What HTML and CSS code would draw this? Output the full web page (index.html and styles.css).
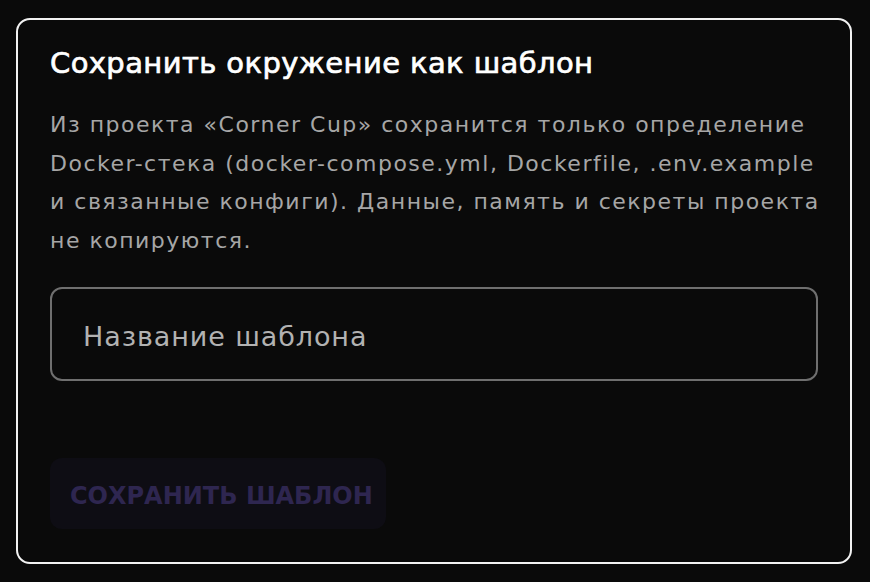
FILE: index.html
```html
<!DOCTYPE html>
<html lang="ru">
<head>
<meta charset="utf-8">
<link rel="stylesheet" href="styles.css">
</head>
<body>
<div class="card">
  <h2 class="title">Сохранить окружение как шаблон</h2>
  <p class="desc">Из проекта «Corner Cup» сохранится только определение Docker-стека (docker-compose.yml, Dockerfile, .env.example и связанные конфиги). Данные, память и секреты проекта не копируются.</p>
  <div class="field"><span class="placeholder">Название шаблона</span></div>
  <div class="actions"><button class="btn">СОХРАНИТЬ ШАБЛОН</button></div>
</div>
</body>
</html>
```
FILE: styles.css
```css
html, body { margin: 0; padding: 0; background: #0a0a0a; }
body { font-family: "DejaVu Sans", "Noto Sans", sans-serif; width: 870px; height: 582px; overflow: hidden; }
.card {
  margin: 18px 0 0 16px;
  width: 836px;
  height: 546px;
  box-sizing: border-box;
  border: 2px solid #f2f2f2;
  border-radius: 14px;
  background: #0a0a0a;
  padding: 26px 32px 0 32px;
}
.title {
  margin: 0;
  font-size: 29px;
  font-weight: 400;
  letter-spacing: 0.4px;
  -webkit-text-stroke: 0.7px #ffffff;
  line-height: 34px;
  color: #ffffff;
}
.desc {
  margin: 26px 0 0 0;
  width: 772px;
  font-size: 22px;
  letter-spacing: 1.5px;
  line-height: 38.5px;
  color: #a6a6a6;
}
.field {
  margin-top: 27px;
  height: 94px;
  width: 768px;
  box-sizing: border-box;
  border: 2px solid #6f6f6f;
  border-radius: 12px;
  display: flex;
  align-items: center;
  padding: 4px 0 0 31px;
}
.placeholder { font-size: 27px; letter-spacing: 0.9px; color: #b2b2b2; }
.actions { margin-top: 77px; }
.btn {
  width: 336px;
  height: 71px;
  border: none;
  border-radius: 12px;
  background: #0e0d14;
  color: #2e2650;
  font-family: inherit;
  font-size: 24px;
  font-weight: 700;
  text-align: left;
  padding: 4px 0 0 20px;
}
```
